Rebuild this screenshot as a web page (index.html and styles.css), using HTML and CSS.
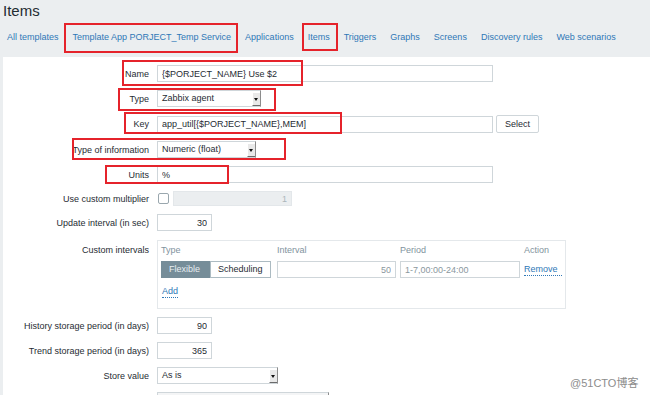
FILE: index.html
```html
<!doctype html>
<html lang="en">
  <head>
    <meta charset="UTF-8" />
    <title>Items</title>
    <link rel="stylesheet" href="styles.css">
  </head>
  <body>
    <header class="page-header">
      <h1 class="page-title">Items</h1>
    </header>

    <nav class="tabs">
      <a href="#" class="tab">All templates</a>
      <a href="#" class="tab">Template App PORJECT_Temp Service</a>
      <a href="#" class="tab">Applications</a>
      <a href="#" class="tab">Items</a>
      <a href="#" class="tab">Triggers</a>
      <a href="#" class="tab">Graphs</a>
      <a href="#" class="tab">Screens</a>
      <a href="#" class="tab">Discovery rules</a>
      <a href="#" class="tab">Web scenarios</a>
    </nav>

    <main class="panel">
      <form class="item-form">
        <label class="form-label">Name</label>
        <div class="form-field">
          <input class="text-input wide" type="text" value="{$PORJECT_NAME} Use $2" />
        </div>

        <label class="form-label">Type</label>
        <div class="form-field">
          <div class="select-box type-select">
            <span class="select-text">Zabbix agent</span>
            <span class="select-arrow"></span>
          </div>
        </div>

        <label class="form-label">Key</label>
        <div class="form-field">
          <input class="text-input wide" type="text" value="app_util[{$PORJECT_NAME},MEM]" />
          <button type="button" class="plain-button">Select</button>
        </div>

        <label class="form-label">Type of information</label>
        <div class="form-field">
          <div class="select-box info-select">
            <span class="select-text">Numeric (float)</span>
            <span class="select-arrow"></span>
          </div>
        </div>

        <label class="form-label">Units</label>
        <div class="form-field">
          <input class="text-input wide" type="text" value="%" />
        </div>

        <label class="form-label">Use custom multiplier</label>
        <div class="form-field">
          <span class="checkbox"></span>
          <input class="text-input multiplier-input" type="text" value="1" disabled />
        </div>

        <label class="form-label">Update interval (in sec)</label>
        <div class="form-field">
          <input class="text-input short" type="text" value="30" />
        </div>

        <label class="form-label label-top">Custom intervals</label>
        <div class="form-field">
          <div class="intervals">
            <div class="intervals-grid">
              <span class="col-head">Type</span>
              <span class="col-head">Interval</span>
              <span class="col-head">Period</span>
              <span class="col-head">Action</span>

              <div class="toggle">
                <span class="toggle-btn active">Flexible</span>
                <span class="toggle-btn">Scheduling</span>
              </div>
              <input class="text-input muted number" type="text" value="50" />
              <input class="text-input muted" type="text" value="1-7,00:00-24:00" />
              <a href="#" class="link">Remove</a>
            </div>
            <a href="#" class="link add-link">Add</a>
          </div>
        </div>

        <label class="form-label">History storage period (in days)</label>
        <div class="form-field">
          <input class="text-input short" type="text" value="90" />
        </div>

        <label class="form-label">Trend storage period (in days)</label>
        <div class="form-field">
          <input class="text-input short" type="text" value="365" />
        </div>

        <label class="form-label">Store value</label>
        <div class="form-field">
          <div class="select-box store-select">
            <span class="select-text">As is</span>
            <span class="select-arrow"></span>
          </div>
        </div>

        <span class="form-label"></span>
        <div class="form-field">
          <div class="select-box show-select"></div>
        </div>
      </form>
    </main>

    <!-- annotation boxes drawn over the page -->
    <span class="mark mark-template"></span>
    <span class="mark mark-items"></span>
    <span class="mark mark-name"></span>
    <span class="mark mark-type"></span>
    <span class="mark mark-key"></span>
    <span class="mark mark-info"></span>
    <span class="mark mark-units"></span>

    <span class="watermark">@51CTO博客</span>
  </body>
</html>
```

FILE: styles.css
```css
* {
  margin: 0;
  padding: 0;
  box-sizing: border-box;
}

html,
body {
  height: 100%;
  overflow: hidden;
}

body {
  position: relative;
  background: #ebeef0;
  font-family: "Liberation Sans", Arial, sans-serif;
  font-size: 9px;
  color: #1f2c33;
}

.page-header {
  height: 24px;
  padding: 2px 0 0 3px;
}

.page-title {
  font-size: 15px;
  font-weight: 400;
  line-height: 18px;
  color: #1f2c33;
}

.tabs {
  display: flex;
  height: 33px;
  padding-top: 6px;
}

.tab {
  padding: 0 7px;
  line-height: 15px;
  color: #2f78b7;
  text-decoration: none;
}

.panel {
  margin-left: 3px;
  background: #fff;
  min-height: 400px;
  padding-top: 8px;
}

.item-form {
  display: grid;
  grid-template-columns: 146px 1fr;
  column-gap: 8px;
  row-gap: 8px;
  align-items: center;
}

.form-label {
  text-align: right;
  line-height: 12px;
}

.label-top {
  align-self: start;
  padding-top: 5px;
}

.form-field {
  display: flex;
  align-items: center;
}

.text-input {
  height: 17px;
  border: 1px solid #cfd6da;
  background: #fff;
  padding: 0 4px;
  font-family: inherit;
  font-size: 9px;
  color: #1f2c33;
}

.wide {
  width: 336px;
}

.short {
  width: 55px;
  text-align: right;
}

.plain-button {
  margin-left: 3px;
  width: 43px;
  height: 18px;
  border: 1px solid #cfd6da;
  border-radius: 2px;
  background: #fff;
  font-family: inherit;
  font-size: 9px;
  color: #1f2c33;
}

.select-box {
  position: relative;
  height: 17px;
  border: 1px solid #cfd6da;
  border-right-color: #8c8c8c;
  background: #fff;
  padding: 0 4px;
  line-height: 15px;
}

.type-select {
  width: 104px;
}

.info-select {
  width: 99px;
}

.store-select {
  width: 121px;
}

.show-select {
  width: 172px;
  background: #f4f5f6;
}

.select-arrow {
  position: absolute;
  top: 1px;
  right: 0;
  width: 8px;
  height: 14px;
  background: #e9e9e9;
  border-top: 1px solid #fff;
  border-left: 1px solid #fff;
  border-bottom: 1px solid #6b6b6b;
}

.select-arrow::after {
  content: "";
  position: absolute;
  left: 1px;
  top: 5px;
  border-left: 2px solid transparent;
  border-right: 2px solid transparent;
  border-top: 3px solid #111;
}

.checkbox {
  width: 11px;
  height: 11px;
  margin-left: 1px;
  border: 1px solid #9aa7ae;
  border-radius: 2px;
  background: #fff;
}

.multiplier-input {
  margin-left: 4px;
  width: 119px;
  height: 15px;
  background: #ebeef0;
  border-color: #e3e7ea;
  color: #acb6bb;
  text-align: right;
}

.intervals {
  margin-top: 1px;
  width: 409px;
  height: 69px;
  border: 1px solid #e4e8eb;
  padding: 1px 3px 0;
}

.intervals-grid {
  display: grid;
  grid-template-columns: 112px 119px 120px auto;
  column-gap: 4px;
  row-gap: 3px;
  align-items: center;
}

.col-head {
  line-height: 16px;
  color: #7f939e;
}

.toggle {
  display: flex;
}

.toggle-btn {
  height: 17px;
  line-height: 15px;
  padding: 0 7px;
  border: 1px solid #acbbc2;
  background: #fff;
  color: #1f2c33;
}

.toggle-btn.active {
  width: 49px;
  background: #768d99;
  border-color: #768d99;
  color: #e8eef1;
}

.muted {
  color: #8a979e;
}

.number {
  text-align: right;
}

.link {
  color: #2f78b7;
  text-decoration: none;
  border-bottom: 1px dotted #2f78b7;
  line-height: 11px;
}

.add-link {
  display: inline-block;
  margin-top: 8px;
  margin-left: 1px;
}

/* red annotation frames */
.mark {
  position: absolute;
  border: 2px solid #e5232b;
}

.mark-template {
  left: 64px;
  top: 23px;
  width: 174px;
  height: 30px;
}

.mark-items {
  left: 302px;
  top: 23px;
  width: 36px;
  height: 28px;
}

.mark-name {
  left: 122px;
  top: 60px;
  width: 181px;
  height: 26px;
}

.mark-type {
  left: 118px;
  top: 88px;
  width: 158px;
  height: 23px;
}

.mark-key {
  left: 124px;
  top: 112px;
  width: 218px;
  height: 22px;
}

.mark-info {
  left: 72px;
  top: 138px;
  width: 214px;
  height: 22px;
}

.mark-units {
  left: 105px;
  top: 165px;
  width: 124px;
  height: 19px;
}

.watermark {
  position: absolute;
  left: 570px;
  top: 374px;
  font-family: "Liberation Sans", "Noto Sans CJK SC", sans-serif;
  font-size: 11px;
  color: #8c8c8c;
}
```
